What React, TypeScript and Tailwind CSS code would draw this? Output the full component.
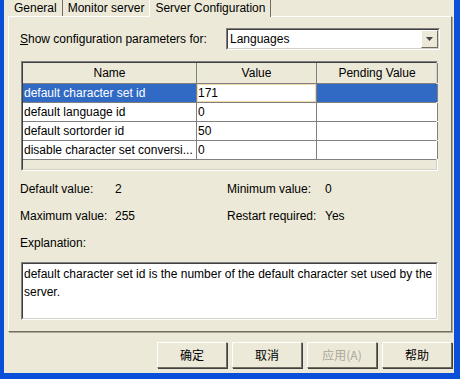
import React from "react";

const rows = [
    { name: "default character set id", value: "171", pending: "" },
    { name: "default language id", value: "0", pending: "" },
    { name: "default sortorder id", value: "50", pending: "" },
    { name: "disable character set conversi...", value: "0", pending: "" },
];

const font = { fontFamily: '"Liberation Sans", Arial, "Noto Sans CJK SC", sans-serif' };

function Tab({ label, active }: { label: string; active?: boolean }) {
    if (active) {
        return (
            <div className="relative z-10 -mb-px -ml-px flex h-[17px] items-end border-l border-r border-l-white border-r-[#716f64] bg-[#ece9d8] px-[5px] pb-[2px] leading-[14px]">
                {label}
            </div>
        );
    }
    return (
        <div className="flex h-[16px] items-end border-r border-r-[#716f64] px-[5px] pb-[1px] leading-[14px]">
            {label}
        </div>
    );
}

function Button({ label, disabled }: { label: string; disabled?: boolean }) {
    return (
        <button
            className={`h-[26px] w-[70px] border border-t-white border-l-white border-r-[#716f64] border-b-[#716f64] bg-[#ece9d8] shadow-[1px_1px_0_#404040] ${
                disabled ? "text-[#aca899]" : "text-black"
            }`}
            style={{ fontFamily: '"Noto Sans CJK SC", sans-serif' }}
        >
            {label}
        </button>
    );
}

export default function App() {
    return (
        <div
            className="flex h-[379px] w-[460px] flex-col border-l-4 border-r-[6px] border-b-[6px] border-[#0a4fd8] bg-[#ece9d8] text-[12px] text-black"
            style={font}
        >
            {/* Tabs */}
            <div className="flex h-[16px] pl-[5px]">
                <Tab label="General" />
                <Tab label="Monitor server" />
                <Tab label="Server Configuration" active />
            </div>

            {/* Tab page */}
            <div className="ml-[4px] mr-[2px] h-[316px] border border-t-white border-l-white border-r-[#716f64] border-b-[#716f64] px-[11px] shadow-[1px_1px_0_#aca899]">
                {/* Show row */}
                <div className="mt-[11px] flex h-[22px] items-center justify-between">
                    <span>
                        <span className="underline">S</span>how configuration parameters for:
                    </span>
                    <div className="flex h-[22px] w-[214px] border border-t-[#808080] border-l-[#808080] border-r-white border-b-white">
                        <div className="flex flex-1 items-center border border-t-[#404040] border-l-[#404040] border-r-[#d4d0c8] border-b-[#d4d0c8] bg-white pl-[2px]">
                            Languages
                            <div className="ml-auto flex h-[18px] w-[17px] items-center justify-center border border-t-white border-l-white border-r-[#716f64] border-b-[#716f64] bg-[#ece9d8]">
                                <svg width="7" height="4" viewBox="0 0 7 4">
                                    <path d="M0 0h7L3.5 4z" fill="#444" />
                                </svg>
                            </div>
                        </div>
                    </div>
                </div>

                {/* Table */}
                <div className="ml-px mt-[11px] h-[110px] w-[417px] border border-t-[#808080] border-l-[#808080] border-r-white border-b-white">
                    <div className="h-full border border-t-[#404040] border-l-[#404040] border-r-[#d4d0c8] border-b-[#d4d0c8] bg-[#ece9d8]">
                        <div className="grid h-[21px] grid-cols-[174px_120px_121px] border-b border-b-[#808080]">
                            <div className="flex items-center justify-center border-r border-r-[#808080]">Name</div>
                            <div className="flex items-center justify-center border-r border-r-[#808080]">Value</div>
                            <div className="flex items-center justify-center border-r border-r-[#808080]">Pending Value</div>
                        </div>
                        {rows.map((r, i) => (
                            <div
                                key={r.name}
                                className="grid h-[19px] grid-cols-[174px_120px_121px] border-b border-b-[#808080]"
                            >
                                <div
                                    className={`flex items-center border-r border-r-[#808080] pl-px ${
                                        i === 0 ? "bg-[#316ac5] text-white" : "bg-white"
                                    }`}
                                >
                                    {r.name}
                                </div>
                                <div
                                    className={`flex items-center border-r border-r-[#808080] bg-white pl-px ${
                                        i === 0 ? "shadow-[inset_0_0_0_1px_#f1d9a8]" : ""
                                    }`}
                                >
                                    {r.value}
                                </div>
                                <div
                                    className={`border-r border-r-[#808080] ${
                                        i === 0 ? "bg-[#316ac5]" : "bg-white"
                                    }`}
                                />
                            </div>
                        ))}
                    </div>
                </div>

                {/* Details */}
                <div className="mt-[11px] grid grid-cols-[207px_1fr] gap-y-[13px]">
                    <div className="flex h-[14px] items-center">
                        <span className="w-[95px]">Default value:</span>
                        <span>2</span>
                    </div>
                    <div className="flex h-[14px] items-center">
                        <span className="w-[98px]">Minimum value:</span>
                        <span>0</span>
                    </div>
                    <div className="flex h-[14px] items-center">
                        <span className="w-[95px]">Maximum value:</span>
                        <span>255</span>
                    </div>
                    <div className="flex h-[14px] items-center">
                        <span className="w-[98px]">Restart required:</span>
                        <span>Yes</span>
                    </div>
                    <div className="col-span-2 flex h-[14px] items-center">Explanation:</div>
                </div>

                {/* Explanation */}
                <div className="ml-px mt-[12px] h-[58px] w-[417px] border border-t-[#808080] border-l-[#808080] border-r-white border-b-white">
                    <div className="h-full border border-t-[#404040] border-l-[#404040] border-r-[#d4d0c8] border-b-[#d4d0c8] bg-white px-px pt-px leading-[18px]">
                        default character set id is the number of the default character set used by the server.
                    </div>
                </div>
            </div>

            {/* Buttons */}
            <div className="mt-[10px] flex justify-end gap-[5px] pr-[2px]">
                <Button label="确定" />
                <Button label="取消" />
                <Button label="应用(A)" disabled />
                <Button label="帮助" />
            </div>
        </div>
    );
}
